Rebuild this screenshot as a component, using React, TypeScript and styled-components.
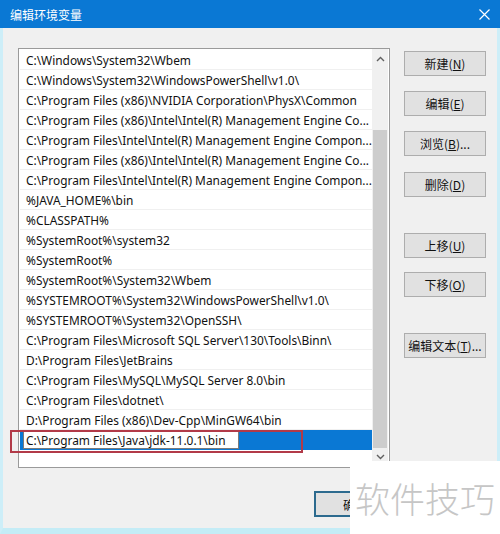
import React from "react";
import styled, { createGlobalStyle } from "styled-components";

const Global = createGlobalStyle`
  html, body { margin: 0; padding: 0; background: #ffffff; }
  body { font-family: "Noto Sans", "Noto Sans CJK SC", sans-serif; }
`;

const Window = styled.div`
  position: relative;
  width: 500px;
  height: 534px;
  box-sizing: border-box;
  display: flex;
  flex-direction: column;
  background: #f0f0f0;
  overflow: hidden;
`;

const TitleBar = styled.div`
  height: 28px;
  flex: none;
  display: flex;
  align-items: center;
  justify-content: space-between;
  padding: 0 10px;
  background: #0a78d4;
  color: #ffffff;
  font-family: "Noto Sans CJK SC", sans-serif;
  font-size: 12px;
`;

const Frame = styled.div`
  flex: 1;
  display: flex;
  flex-direction: column;
  border-left: 3px solid #cdeef8;
  border-right: 3px solid #cdeef8;
  border-bottom: 6px solid #c4ecf6;
  background: #f0f0f0;
`;

const Main = styled.div`
  display: flex;
  padding: 20px 0 0 15px;
  gap: 14px;
`;

const ListBox = styled.div`
  position: relative;
  width: 372px;
  height: 420px;
  flex: none;
  box-sizing: border-box;
  border: 1px solid #9a9a9a;
  background: #ffffff;
  display: flex;
`;

const Rows = styled.div`
  flex: 1;
  min-width: 0;
  overflow: hidden;
  padding: 1px 0 0 1px;
  display: flex;
  flex-direction: column;
`;

const Row = styled.div<{ $selected?: boolean }>`
  height: 20px;
  flex: none;
  box-sizing: border-box;
  display: flex;
  align-items: center;
  padding-left: 6px;
  border-bottom: 1px solid #f0f0f0;
  font-size: 11.9px;
  color: #111;
  white-space: nowrap;
  background: ${(p) => (p.$selected ? "#0a78d4" : "transparent")};
  ${(p) => (p.$selected ? "padding-left: 3px; border-bottom: none;" : "")}
`;

const EditBox = styled.div`
  height: 18px;
  width: 216px;
  box-sizing: border-box;
  display: flex;
  align-items: center;
  padding-left: 2px;
  background: #ffffff;
  border: 1px solid #7a7a7a;
  font-size: 11.9px;
  color: #111;
`;

const ScrollBar = styled.div`
  width: 16px;
  flex: none;
  display: flex;
  flex-direction: column;
  align-items: center;
  background: #f0f0f0;
  margin-right: 1px;
`;

const Arrow = styled.div`
  height: 20px;
  width: 100%;
  display: flex;
  align-items: center;
  justify-content: center;
`;

const Track = styled.div`
  flex: 1;
  width: 100%;
  display: flex;
  flex-direction: column;
`;

const Thumb = styled.div`
  margin-top: 61px;
  height: 318px;
  width: 14px;
  margin-left: 1px;
  background: #cdcdcd;
`;

const Buttons = styled.div`
  display: flex;
  flex-direction: column;
  padding-top: 3px;
`;

const Btn = styled.div<{ $gap?: number }>`
  width: 82px;
  height: 25px;
  box-sizing: border-box;
  margin-top: ${(p) => p.$gap ?? 0}px;
  display: flex;
  align-items: center;
  justify-content: center;
  background: #e1e1e1;
  border: 1px solid #adadad;
  font-family: "Noto Sans CJK SC", sans-serif;
  font-size: 12px;
  color: #111;
`;

const U = styled.span`
  text-decoration: underline;
`;

const Footer = styled.div`
  display: flex;
  padding: 23px 0 0 311px;
`;

const OkBtn = styled.div`
  width: 82px;
  height: 26px;
  box-sizing: border-box;
  display: flex;
  align-items: center;
  justify-content: center;
  background: #e1e1e1;
  border: 2px solid #2c6a8e;
  font-family: "Noto Sans CJK SC", sans-serif;
  font-size: 12px;
  color: #111;
`;

const Highlight = styled.div`
  position: absolute;
  left: 10px;
  top: 430px;
  width: 293px;
  height: 23px;
  box-sizing: border-box;
  border: 2px solid #b23a48;
  pointer-events: none;
`;

const Watermark = styled.div`
  position: absolute;
  left: 350px;
  top: 461px;
  width: 150px;
  height: 73px;
  background: #ffffff;
  display: flex;
  align-items: center;
  justify-content: center;
  font-family: "Noto Sans CJK SC", sans-serif;
  font-weight: 300;
  font-size: 35px;
  color: #c6c6c6;
  letter-spacing: 0px;
`;

const paths = [
  "C:\\Windows\\System32\\Wbem",
  "C:\\Windows\\System32\\WindowsPowerShell\\v1.0\\",
  "C:\\Program Files (x86)\\NVIDIA Corporation\\PhysX\\Common",
  "C:\\Program Files (x86)\\Intel\\Intel(R) Management Engine Co...",
  "C:\\Program Files\\Intel\\Intel(R) Management Engine Compon...",
  "C:\\Program Files (x86)\\Intel\\Intel(R) Management Engine Co...",
  "C:\\Program Files\\Intel\\Intel(R) Management Engine Compon...",
  "%JAVA_HOME%\\bin",
  "%CLASSPATH%",
  "%SystemRoot%\\system32",
  "%SystemRoot%",
  "%SystemRoot%\\System32\\Wbem",
  "%SYSTEMROOT%\\System32\\WindowsPowerShell\\v1.0\\",
  "%SYSTEMROOT%\\System32\\OpenSSH\\",
  "C:\\Program Files\\Microsoft SQL Server\\130\\Tools\\Binn\\",
  "D:\\Program Files\\JetBrains",
  "C:\\Program Files\\MySQL\\MySQL Server 8.0\\bin",
  "C:\\Program Files\\dotnet\\",
  "D:\\Program Files (x86)\\Dev-Cpp\\MinGW64\\bin",
];

const Chevron = ({ up }: { up?: boolean }) => (
  <svg width="9" height="6" viewBox="0 0 9 6">
    <path
      d={up ? "M1 5 L4.5 1.5 L8 5" : "M1 1 L4.5 4.5 L8 1"}
      fill="none"
      stroke="#606060"
      strokeWidth="1.4"
    />
  </svg>
);

const CloseIcon = () => (
  <svg width="11" height="11" viewBox="0 0 11 11">
    <path d="M0.5 0.5 L10.5 10.5 M10.5 0.5 L0.5 10.5" stroke="#fff" strokeWidth="1.2" />
  </svg>
);

export default function App() {
  return (
    <>
      <Global />
      <Window>
        <TitleBar>
          <span>编辑环境变量</span>
          <CloseIcon />
        </TitleBar>
        <Frame>
          <Main>
            <ListBox>
              <Rows>
                {paths.map((p, i) => (
                  <Row key={i}>{p}</Row>
                ))}
                <Row $selected>
                  <EditBox>C:\Program Files\Java\jdk-11.0.1\bin</EditBox>
                </Row>
              </Rows>
              <ScrollBar>
                <Arrow>
                  <Chevron up />
                </Arrow>
                <Track>
                  <Thumb />
                </Track>
                <Arrow>
                  <Chevron />
                </Arrow>
              </ScrollBar>
            </ListBox>
            <Buttons>
              <Btn>新建(<U>N</U>)</Btn>
              <Btn $gap={15}>编辑(<U>E</U>)</Btn>
              <Btn $gap={15}>浏览(<U>B</U>)...</Btn>
              <Btn $gap={16}>删除(<U>D</U>)</Btn>
              <Btn $gap={36}>上移(<U>U</U>)</Btn>
              <Btn $gap={14}>下移(<U>O</U>)</Btn>
              <Btn $gap={36}>编辑文本(<U>T</U>)...</Btn>
            </Buttons>
          </Main>
          <Footer>
            <OkBtn>确定</OkBtn>
          </Footer>
        </Frame>
        <Highlight />
        <Watermark>软件技巧</Watermark>
      </Window>
    </>
  );
}
